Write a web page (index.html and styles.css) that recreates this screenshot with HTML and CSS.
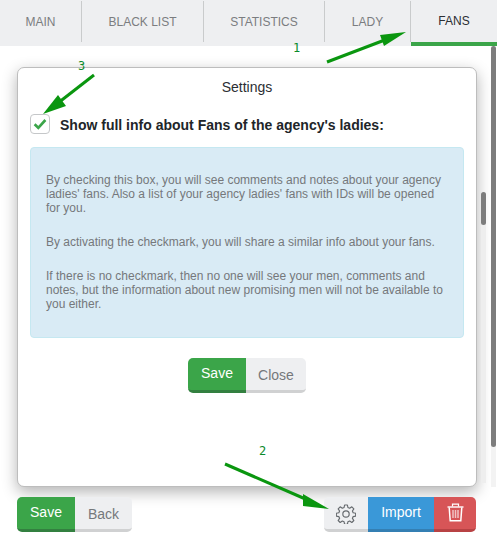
FILE: index.html
```html
<!DOCTYPE html>
<html lang="en">
<head>
<meta charset="utf-8">
<title>Settings</title>
<link rel="stylesheet" href="styles.css">
</head>
<body>
<nav class="tabs">
  <a class="tab tab-main">MAIN</a>
  <a class="tab tab-black">BLACK LIST</a>
  <a class="tab tab-stat">STATISTICS</a>
  <a class="tab tab-lady">LADY</a>
  <a class="tab tab-fans">FANS</a>
</nav>
<main class="content">
  <section class="modal">
    <h2 class="modal-title">Settings</h2>
    <label class="check-row">
      <span class="checkbox">
        <svg width="14" height="12" viewBox="0 0 14 12"><path d="M1.6 6.2 L5.3 9.8 L12.4 2" fill="none" stroke="#3ba549" stroke-width="2.6"/></svg>
      </span>
      <span class="check-label">Show full info about Fans of the agency's ladies:</span>
    </label>
    <div class="info">
      <p>By checking this box, you will see comments and notes about your agency ladies' fans. Also a list of your agency ladies' fans with IDs will be opened for you.</p>
      <p>By activating the checkmark, you will share a similar info about your fans.</p>
      <p>If there is no checkmark, then no one will see your men, comments and notes, but the information about new promising men will not be available to you either.</p>
    </div>
    <div class="modal-actions">
      <div class="btn-group">
        <button class="btn btn-green btn-w58">Save</button>
        <button class="btn btn-grey btn-w60">Close</button>
      </div>
    </div>
  </section>
  <footer class="actions">
    <div class="btn-group">
      <button class="btn btn-green btn-w58">Save</button>
      <button class="btn btn-grey btn-w57">Back</button>
    </div>
    <div class="btn-group">
      <button class="btn btn-grey btn-w44" aria-label="Settings">
        <svg width="20" height="20" viewBox="0 0 24 24" fill="none" stroke="#666a6e" stroke-width="1.4" stroke-linejoin="round"><circle cx="12" cy="12" r="3.8"/><path d="M10.3 1.2h3.4l.6 3 2.100.9 2.600-1.700 2.400 2.400-1.700 2.600.9 2.100 3 .6v3.400l-3 .6-.9 2.100 1.700 2.600-2.400 2.400-2.600-1.700-2.100.9-.6 3h-3.400l-.6-3-2.100-.9-2.600 1.700-2.400-2.400 1.700-2.600-.9-2.100-3-.6v-3.400l3-.6.9-2.100-1.700-2.600 2.400-2.400 2.600 1.700 2.100-.9z"/></svg>
      </button>
      <button class="btn btn-blue btn-w66">Import</button>
      <button class="btn btn-red btn-w42" aria-label="Delete">
        <svg width="17" height="19" viewBox="0 0 17 19" fill="none" stroke="#fff"><path d="M.5 4h16" stroke-width="1.4"/><path d="M5.5 3.500V1.200h6v2.300" stroke-width="1.200"/><path d="M2.200 4.500l1 13.300h10.600l1-13.300" stroke-width="1.500"/><path d="M6 7v8M8.500 7v8M11 7v8" stroke-width="1.500" stroke-opacity=".65"/></svg>
      </button>
    </div>
  </footer>
</main>

<div class="scroll scroll-inner"><div class="thumb thumb-inner"></div></div>
<div class="scroll scroll-outer"><div class="thumb thumb-outer"></div></div>

<svg class="arrows" width="497" height="538" viewBox="0 0 497 538">
  <g fill="#0a960f" stroke="#0a960f">
    <path d="M327 62 L390 38" stroke-width="3" fill="none"/>
    <path d="M406 32 L380 35 L384 46z" stroke="none"/>
    <path d="M225 464 L310 501" stroke-width="3" fill="none"/>
    <path d="M329 509 L303 494 L303 506z" stroke="none"/>
    <path d="M94 75 L58 103" stroke-width="3" fill="none"/>
    <path d="M43 114 L58 95 L66 106z" stroke="none"/>
  </g>
</svg>
<span class="mark mark-1">1</span>
<span class="mark mark-2">2</span>
<span class="mark mark-3">3</span>
</body>
</html>
```
FILE: styles.css
```css
* { box-sizing: border-box; }
html, body { margin: 0; height: 100%; }
body {
  position: relative;
  width: 497px;
  height: 538px;
  overflow: hidden;
  background: #fff;
  font-family: "Liberation Sans", Arial, sans-serif;
  color: #212529;
}
.tabs {
  display: flex;
  height: 46px;
  background: #eeeff1;
}
.tab {
  display: flex;
  align-items: center;
  justify-content: center;
  height: 41px;
  margin-top: 1px;
  font-size: 12px;
  color: #7b7d80;
  border-right: 1px solid #c9cbcc;
}
.tab-main { width: 82px; }
.tab-black { width: 122px; }
.tab-stat { width: 121px; }
.tab-lady { width: 86px; }
.tab-fans {
  width: 86px;
  height: 46px;
  margin-top: 0;
  padding-bottom: 1px;
  border-right: 0;
  border-bottom: 4px solid #3ba549;
  color: #2b2e33;
}
.content { padding: 21px 20px 0 17px; }
.modal {
  height: 420px;
  padding: 11px 12px 0;
  border: 1px solid #bdbdbd;
  border-radius: 7px;
  box-shadow: 0 5px 15px rgba(0, 0, 0, .3);
  background: #fff;
}
.modal-title {
  margin: 0;
  font-size: 14px;
  font-weight: 400;
  line-height: 16px;
  text-align: center;
  color: #2b2e33;
}
.check-row {
  display: flex;
  align-items: center;
  gap: 10px;
  margin-top: 19px;
}
.checkbox {
  display: flex;
  align-items: center;
  justify-content: center;
  width: 20px;
  height: 20px;
  border: 1px solid #c5c7c9;
  border-radius: 4px;
}
.check-label {
  padding-top: 2px;
  font-size: 14px;
  font-weight: 700;
  color: #212529;
}
.info {
  height: 191px;
  margin-top: 13px;
  padding: 25px 15px 0;
  background: #d9ebf5;
  border: 1px solid #c5e8f1;
  border-radius: 4px;
  font-size: 12px;
  line-height: 14px;
  color: #75787b;
}
.info p { margin: 0 0 20px; }
.modal-actions {
  display: flex;
  justify-content: center;
  margin-top: 20px;
}
.actions {
  display: flex;
  justify-content: space-between;
  margin-top: 10px;
  padding-right: 1px;
}
.btn-group { display: flex; }
.btn {
  display: flex;
  align-items: center;
  justify-content: center;
  height: 35px;
  padding: 0;
  border: 0;
  font: 14px "Liberation Sans", Arial, sans-serif;
  color: #fff;
}
.btn-group .btn:first-child { border-radius: 5px 0 0 5px; }
.btn-group .btn:last-child { border-radius: 0 5px 5px 0; }
.btn-green { background: #3ba549; border-bottom: 3px solid #338040; padding-bottom: 2px; }
.btn-grey { background: #eeeff1; border-bottom: 3px solid #d0d1d2; color: #75787b; padding-top: 2px; }
.btn-blue { background: #3a98d8; border-bottom: 3px solid #347fb3; padding-bottom: 2px; }
.btn-red { background: #d75557; border-bottom: 3px solid #b84244; padding-bottom: 2px; }
.btn-w58 { width: 58px; }
.btn-w60 { width: 60px; }
.btn-w57 { width: 57px; }
.btn-w44 { width: 44px; }
.btn-w66 { width: 66px; }
.btn-w42 { width: 42px; }

/* overlays: nested scrollbars and the screenshot's annotations */
.scroll {
  position: absolute;
  background: #eee;
}
.thumb {
  background: #7d7d7d;
  border-radius: 3px;
}
.scroll-inner { left: 481px; top: 192px; width: 5px; height: 291px; }
.thumb-inner { height: 33px; }
.scroll-outer { left: 491px; top: 46px; width: 5px; height: 441px; background: #f3f3f3; }
.thumb-outer { height: 401px; }
.arrows {
  position: absolute;
  left: 0;
  top: 0;
  pointer-events: none;
}
.mark {
  position: absolute;
  font: 12px "DejaVu Sans Mono", monospace;
  color: #0a8a2a;
}
.mark-1 { left: 293px; top: 41px; }
.mark-2 { left: 259px; top: 444px; }
.mark-3 { left: 78px; top: 59px; }
```
